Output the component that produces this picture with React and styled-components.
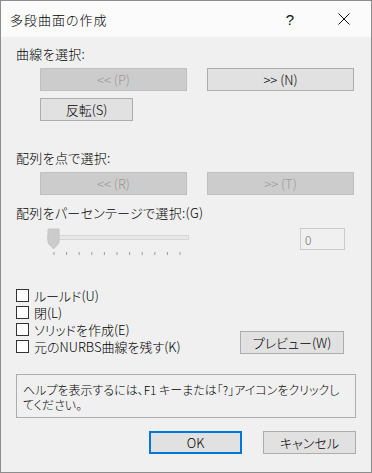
import React from 'react';
import styled, { createGlobalStyle } from 'styled-components';

const GlobalStyle = createGlobalStyle`
  html, body {
    margin: 0;
    padding: 0;
    background: #ffffff;
  }
  body {
    font-family: "Noto Sans CJK JP", "Noto Sans", sans-serif;
    font-feature-settings: "palt" 1;
    font-weight: 300;
  }
`;

const Dialog = styled.div`
  width: 372px;
  height: 473px;
  box-sizing: border-box;
  border: 1px solid #8d8d8d;
  background: #f0f0f0;
  display: flex;
  flex-direction: column;
  color: #000;
  font-size: 13px;
`;

const TitleBar = styled.div`
  height: 36px;
  flex-shrink: 0;
  background: #fbfbfb;
  display: flex;
  align-items: center;
  padding-left: 9px;
`;

const Title = styled.div`
  flex: 1;
  font-size: 13px;
  letter-spacing: 1px;
`;

const TitleButton = styled.div`
  width: 54px;
  height: 36px;
  display: flex;
  align-items: center;
  justify-content: center;
  font-family: "Liberation Sans", sans-serif;
  font-size: 15px;
  color: #111;
`;

const Body = styled.div`
  display: flex;
  flex-direction: column;
  padding: 0 15px;
`;

const SectionLabel = styled.div`
  margin-top: ${(p) => p.$top}px;
  height: 16px;
  line-height: 16px;
  letter-spacing: 0.3px;
`;

const ButtonRow = styled.div`
  display: flex;
  gap: 20px;
  margin-top: ${(p) => p.$top}px;
  padding-left: 24px;
`;

const Button = styled.div`
  width: ${(p) => p.$w}px;
  height: 23px;
  box-sizing: border-box;
  display: flex;
  align-items: center;
  justify-content: center;
  font-size: 13px;
  line-height: 16px;
  border: 1px solid ${(p) => (p.$disabled ? '#bfbfbf' : p.$primary ? '#0078d7' : '#adadad')};
  background: ${(p) => (p.$disabled ? '#cccccc' : '#e1e1e1')};
  color: ${(p) => (p.$disabled ? '#9a9a9a' : '#000')};
  box-shadow: ${(p) => (p.$primary ? 'inset 0 0 0 1px #0078d7' : 'none')};
  margin-top: ${(p) => p.$top || 0}px;
  margin-left: ${(p) => p.$left || 0}px;
`;

const SliderRow = styled.div`
  display: flex;
  align-items: flex-start;
  margin-top: 7px;
  padding-left: 31px;
  height: 27px;
`;

const NumberField = styled.div`
  margin-left: auto;
  margin-right: 11px;
  width: 45px;
  height: 22px;
  box-sizing: border-box;
  border: 1px solid #cccccc;
  padding-left: 4px;
  display: flex;
  align-items: center;
  color: #6d6d6d;
  font-size: 12px;
`;

const OptionsRow = styled.div`
  display: flex;
  align-items: flex-end;
  margin-top: 32px;
`;

const CheckList = styled.div`
  display: flex;
  flex-direction: column;
`;

const CheckRow = styled.label`
  display: flex;
  align-items: center;
  height: 17px;
  line-height: 17px;
  gap: 5px;
  font-size: 13px;
`;

const Box = styled.span`
  width: 13px;
  height: 13px;
  flex-shrink: 0;
  box-sizing: border-box;
  border: 1px solid #333333;
  background: #ffffff;
`;

const PreviewButton = styled(Button)`
  margin-left: auto;
  margin-right: 12px;
  margin-bottom: 1px;
`;

const HelpBox = styled.div`
  margin-top: 19px;
  height: 44px;
  box-sizing: border-box;
  border: 1px solid #adadad;
  padding: 7px 0 0 6px;
  font-size: 12px;
  line-height: 15px;
  white-space: nowrap;
`;

const Footer = styled.div`
  display: flex;
  justify-content: flex-end;
  gap: 21px;
  margin-top: 13px;
`;

const SliderGraphic = () => {
  const ticks = Array.from({ length: 11 }, (_, i) => 7 + i * 12.6);
  return (
    <svg width="145" height="27" viewBox="0 0 145 27">
      <rect x="0.5" y="7.5" width="141" height="4" fill="#e7e7e7" stroke="#d6d6d6" />
      <path d="M1 1 H12 V15 L6.5 21 L1 15 Z" fill="#cccccc" stroke="#c4c4c4" />
      {ticks.map((x) => (
        <line key={x} x1={x} y1="24" x2={x} y2="27" stroke="#9a9a9a" strokeWidth="1" />
      ))}
    </svg>
  );
};

const CloseIcon = () => (
  <svg width="12" height="12" viewBox="0 0 12 12">
    <path d="M0.5 0.5 L11.5 11.5 M11.5 0.5 L0.5 11.5" stroke="#111" strokeWidth="1" />
  </svg>
);

export default function App() {
  const options = ['ルールド(U)', '閉(L)', 'ソリッドを作成(E)', '元のNURBS曲線を残す(K)'];

  return (
    <>
      <GlobalStyle />
      <Dialog>
        <TitleBar>
          <Title>多段曲面の作成</Title>
          <TitleButton>?</TitleButton>
          <TitleButton>
            <CloseIcon />
          </TitleButton>
        </TitleBar>
        <Body>
          <SectionLabel $top={9}>曲線を選択:</SectionLabel>
          <ButtonRow $top={6}>
            <Button $w={147} $disabled>&lt;&lt; (P)</Button>
            <Button $w={147}>&gt;&gt; (N)</Button>
          </ButtonRow>
          <Button $w={93} $top={7} $left={24}>反転(S)</Button>

          <SectionLabel $top={29}>配列を点で選択:</SectionLabel>
          <ButtonRow $top={6}>
            <Button $w={147} $disabled>&lt;&lt; (R)</Button>
            <Button $w={147} $disabled>&gt;&gt; (T)</Button>
          </ButtonRow>

          <SectionLabel $top={10}>配列をパーセンテージで選択:(G)</SectionLabel>
          <SliderRow>
            <SliderGraphic />
            <NumberField>0</NumberField>
          </SliderRow>

          <OptionsRow>
            <CheckList>
              {options.map((o) => (
                <CheckRow key={o}>
                  <Box />
                  {o}
                </CheckRow>
              ))}
            </CheckList>
            <PreviewButton $w={104}>プレビュー(W)</PreviewButton>
          </OptionsRow>

          <HelpBox>
            ヘルプを表示するには、F1 キーまたは「?」アイコンをクリックし
            <br />
            てください。
          </HelpBox>

          <Footer>
            <Button $w={93} $primary>OK</Button>
            <Button $w={93}>キャンセル</Button>
          </Footer>
        </Body>
      </Dialog>
    </>
  );
}
